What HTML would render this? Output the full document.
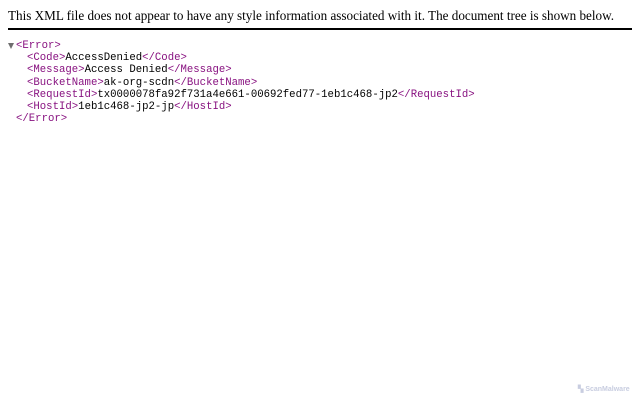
<!DOCTYPE html>
<html><head><style>
body{margin:0;background:#fff;}
.hdr{position:absolute;left:8px;top:8px;width:624px;font:13.15px "Liberation Serif",serif;color:#000;border-bottom:2px solid #000;padding-bottom:4px;white-space:nowrap;}
.x{position:absolute;left:16px;top:40px;font:10.67px/12.2px "Liberation Mono",monospace;color:#000;white-space:pre;}
.x div.i{padding-left:11px;}
.t{color:#881280;}
.ar{position:absolute;left:8px;top:43px;width:0;height:0;border-left:3.5px solid transparent;border-right:3.5px solid transparent;border-top:6px solid #6e6e6e;}
.wm{position:absolute;left:578px;top:385px;font:bold 7px "Liberation Sans",sans-serif;color:#c8cde0;}
</style></head><body>
<div class="hdr">This XML file does not appear to have any style information associated with it. The document tree is shown below.</div>
<div class="ar"></div>
<div class="x"><div><span class="t">&lt;Error&gt;</span></div><div class="i"><span class="t">&lt;Code&gt;</span>AccessDenied<span class="t">&lt;/Code&gt;</span></div><div class="i"><span class="t">&lt;Message&gt;</span>Access Denied<span class="t">&lt;/Message&gt;</span></div><div class="i"><span class="t">&lt;BucketName&gt;</span>ak-org-scdn<span class="t">&lt;/BucketName&gt;</span></div><div class="i"><span class="t">&lt;RequestId&gt;</span>tx0000078fa92f731a4e661-00692fed77-1eb1c468-jp2<span class="t">&lt;/RequestId&gt;</span></div><div class="i"><span class="t">&lt;HostId&gt;</span>1eb1c468-jp2-jp<span class="t">&lt;/HostId&gt;</span></div><div><span class="t">&lt;/Error&gt;</span></div></div>
<div class="wm">▚ ScanMalware</div>
</body></html>
